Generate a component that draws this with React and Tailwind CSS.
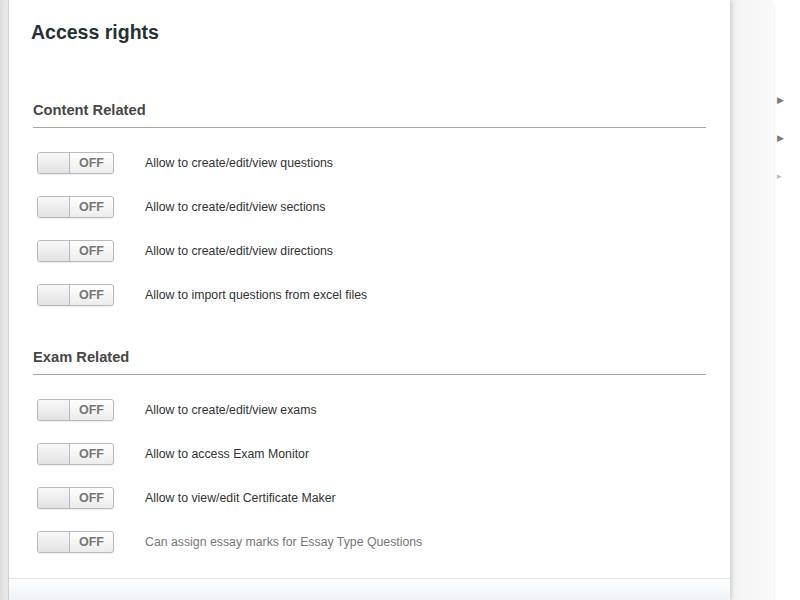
import React from 'react';

const contentRights = [
  'Allow to create/edit/view questions',
  'Allow to create/edit/view sections',
  'Allow to create/edit/view directions',
  'Allow to import questions from excel files',
];

const examRights = [
  'Allow to create/edit/view exams',
  'Allow to access Exam Monitor',
  'Allow to view/edit Certificate Maker',
  'Can assign essay marks for Essay Type Questions',
];

function OffSwitch() {
  return (
    <div className="flex h-[22px] w-[77px] shrink-0 overflow-hidden rounded-[3px] border border-[#b9b9b9] bg-gradient-to-b from-white to-[#ececec] shadow-[0_1px_1px_rgba(0,0,0,0.08)]">
      <div className="w-[32px] border-r border-[#b9b9b9] bg-gradient-to-b from-[#f8f8f8] to-[#e2e2e2]" />
      <div className="flex flex-1 items-center justify-center text-[12.5px] font-bold text-[#777]">OFF</div>
    </div>
  );
}

function Section({ title, items, className }) {
  return (
    <div className={className}>
      <h2 className="border-b border-[#a6a6a6] pb-[8px] text-[14.7px] font-bold leading-[17px] text-[#474747]">{title}</h2>
      <ul className="mt-[13px]">
        {items.map((label, i) => (
          <li key={label} className="flex h-[44px] items-center pl-[4px]">
            <OffSwitch />
            <span className={`ml-[31px] text-[12.3px] ${i === 3 && title === 'Exam Related' ? 'text-[#777]' : 'text-[#333]'}`}>{label}</span>
          </li>
        ))}
      </ul>
    </div>
  );
}

export default function App() {
  return (
    <div className="flex h-[600px] w-[800px] overflow-hidden bg-white" style={{ fontFamily: '"Liberation Sans", Arial, sans-serif' }}>
      {/* left edge of the window behind */}
      <div className="w-[8px] shrink-0 bg-gradient-to-r from-[#dcdcdc] to-[#efefef]" />

      {/* main panel */}
      <div className="relative z-10 flex w-[722px] shrink-0 flex-col border-l border-[#d0d0d0] bg-white shadow-[2px_0_5px_rgba(0,0,0,0.16)]">
        <div className="flex-1 px-[24px] pt-[20px]">
          <h1 className="-ml-[2px] text-[19.5px] font-bold leading-[24px] text-[#263034]">Access rights</h1>
          <Section title="Content Related" items={contentRights} className="mt-[58px]" />
          <Section title="Exam Related" items={examRights} className="mt-[32px]" />
        </div>
        <div className="h-[22px] border-t border-[#e2e2e2] bg-gradient-to-b from-white to-[#edf3f8]" />
      </div>

      {/* stacked pages on the right */}
      <div className="w-[44px] shrink-0 rounded-tr-[8px] bg-gradient-to-r from-[#f4f4f4] to-[#fafafa] shadow-[1px_0_2px_rgba(0,0,0,0.06)]" />
      <div className="flex flex-1 flex-col items-start pl-[3px] pt-[96px] text-[9px] leading-none text-[#7a7a7a]">
        <span>▶</span>
        <span className="mt-[29px]">▶</span>
        <span className="mt-[29px] text-[#bbb]">▸</span>
      </div>
    </div>
  );
}
